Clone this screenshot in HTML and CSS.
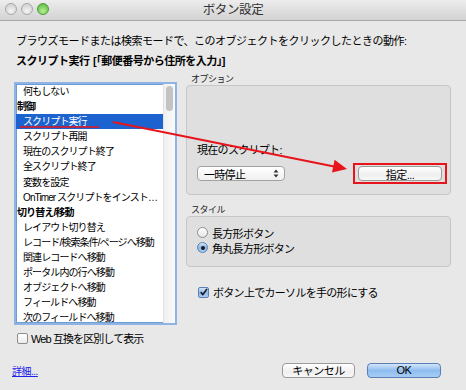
FILE: index.html
```html
<!DOCTYPE html>
<html lang="ja">
<head>
    <meta charset="UTF-8">
    <meta name="viewport" content="width=device-width, initial-scale=1.0">
    <title>ボタン設定</title>
    <link rel="stylesheet" href="styles.css">
</head>
<body>
    <div class="window">
        <div class="titlebar">
            <div class="lights">
                <span class="light"></span>
                <span class="light"></span>
                <span class="light green"></span>
            </div>
            <div class="title">ボタン設定</div>
        </div>

        <div class="content">
            <p class="prompt">ブラウズモードまたは検索モードで、このオブジェクトをクリックしたときの動作:</p>
            <p class="action">スクリプト実行 [「郵便番号から住所を入力」]</p>

            <div class="main">
                <div class="left">
                    <div class="list">
                        <ul class="items">
                            <li class="item">何もしない</li>
                            <li class="group">制御</li>
                            <li class="item selected">スクリプト実行</li>
                            <li class="item">スクリプト再開</li>
                            <li class="item">現在のスクリプト終了</li>
                            <li class="item">全スクリプト終了</li>
                            <li class="item">変数を設定</li>
                            <li class="item">OnTimer スクリプトをインスト…</li>
                            <li class="group">切り替え/移動</li>
                            <li class="item">レイアウト切り替え</li>
                            <li class="item">レコード/検索条件/ページへ移動</li>
                            <li class="item">関連レコードへ移動</li>
                            <li class="item">ポータル内の行へ移動</li>
                            <li class="item">オブジェクトへ移動</li>
                            <li class="item">フィールドへ移動</li>
                            <li class="item">次のフィールドへ移動</li>
                        </ul>
                        <div class="scrollbar"><div class="thumb"></div></div>
                    </div>
                    <div class="check web">
                        <span class="box"></span>
                        <span>Web 互換を区別して表示</span>
                    </div>
                </div>

                <div class="right">
                    <div class="group-label">オプション</div>
                    <div class="panel options">
                        <div class="field-label">現在のスクリプト:</div>
                        <div class="options-row">
                            <div class="popup">
                                <span>一時停止</span>
                                <svg class="stepper" width="6" height="9" viewBox="0 0 6 9">
                                    <path d="M0.5 3.5 L3 0.5 L5.5 3.5 Z M0.5 5.5 L3 8.5 L5.5 5.5 Z" fill="#333"/>
                                </svg>
                            </div>
                            <div class="highlight">
                                <div class="button specify">指定...</div>
                            </div>
                        </div>
                    </div>

                    <div class="group-label">スタイル</div>
                    <div class="panel style">
                        <div class="radio"><span class="dot"></span>長方形ボタン</div>
                        <div class="radio"><span class="dot on"></span>角丸長方形ボタン</div>
                    </div>

                    <div class="check cursor">
                        <span class="box on">
                            <svg width="11" height="11" viewBox="0 0 11 11">
                                <path d="M2.5 5.5 L4.6 8.2 L9.5 1.5" fill="none" stroke="#1b1b1b" stroke-width="1.8" stroke-linecap="round" stroke-linejoin="round"/>
                            </svg>
                        </span>
                        <span>ボタン上でカーソルを手の形にする</span>
                    </div>
                </div>
            </div>

            <div class="footer">
                <a class="details" href="#">詳細...</a>
                <div class="buttons">
                    <div class="button cancel">キャンセル</div>
                    <div class="button default">OK</div>
                </div>
            </div>
        </div>

        <!-- red annotation: underline + arrow pointing to the button -->
        <svg class="annotation" width="466" height="390" viewBox="0 0 466 390">
            <line x1="20" y1="127" x2="99" y2="127" stroke="#e8141b" stroke-width="1.5"/>
            <line x1="113" y1="122" x2="334" y2="166.4" stroke="#e8141b" stroke-width="2"/>
            <polygon points="347,169 332,172.5 334.6,159.8" fill="#e8141b"/>
        </svg>
    </div>
</body>
</html>
```

FILE: styles.css
```css
* {
    box-sizing: border-box;
}
body {
    margin: 0;
    font-family: "Liberation Sans", "Noto Sans CJK JP", sans-serif;
    font-size: 11px;
    color: #000;
}
.window {
    position: relative;
    width: 466px;
    height: 390px;
    background-color: #e8e8e8;
    overflow: hidden;
}
.titlebar {
    position: relative;
    height: 21px;
    background: linear-gradient(#ededed, #d2d2d2);
    border-bottom: 1px solid #a8a8a8;
}
.lights {
    display: flex;
    gap: 4px;
    padding: 3px 0 0 5px;
}
.light {
    width: 12px;
    height: 12px;
    border-radius: 50%;
    border: 1px solid #a9a9a9;
    background: radial-gradient(circle at 50% 70%, #f4f4f4, #c9c9c9);
}
.light.green {
    border-color: #4c9a3a;
    background: radial-gradient(circle at 50% 70%, #b8f08f, #4fb33a);
}
.title {
    position: absolute;
    top: 0;
    left: 0;
    right: 0;
    text-align: center;
    line-height: 20px;
    font-size: 12.5px;
    letter-spacing: -0.4px;
    color: #333;
}
.content {
    padding: 10px 15px 0 14px;
}
.prompt,
.action {
    margin: 0;
    padding-left: 2px;
    line-height: 20px;
    letter-spacing: -0.5px;
}
.action {
    font-weight: bold;
    word-spacing: 1px;
}
.main {
    display: flex;
    gap: 9px;
    margin-top: 2px;
}
.left {
    width: 163px;
    padding-top: 9px;
}
.list {
    display: flex;
    height: 243px;
    background-color: #fff;
    border: 2px solid #8fb4e4;
    box-shadow: inset 0 0 0 1px #6e9cd8;
    overflow: hidden;
}
.items {
    flex: 1;
    margin: 0;
    padding: 0;
    list-style: none;
    font-size: 10px;
    letter-spacing: -0.9px;
}
.items li {
    height: 15.1px;
    line-height: 15.1px;
    white-space: nowrap;
    overflow: hidden;
}
.group {
    padding-left: 1px;
    font-weight: bold;
}
.item {
    padding-left: 7px;
}
.item.selected {
    background-color: #1d63cf;
    color: #fff;
}
.scrollbar {
    width: 12px;
    background: linear-gradient(90deg, #f0f0f0, #fafafa);
    border-left: 1px solid #e2e2e2;
    padding: 2px 0 0 2px;
}
.thumb {
    width: 7px;
    height: 25px;
    border-radius: 4px;
    background-color: #c3c3c3;
}
.check {
    display: flex;
    align-items: center;
    height: 16px;
    letter-spacing: -0.7px;
}
.box {
    display: flex;
    align-items: center;
    justify-content: center;
    width: 11px;
    height: 11px;
    border: 1px solid #8c8c8c;
    border-radius: 2px;
    background: linear-gradient(#fff, #ececec);
}
.box.on {
    border-color: #5a80b6;
    background: linear-gradient(#d6e6f8, #8ab6ea 50%, #a9cdf3);
}
.web {
    margin-top: 5px;
    padding-left: 3px;
    gap: 3px;
    letter-spacing: -0.9px;
}
.right {
    flex: 1;
}
.group-label {
    height: 12px;
    line-height: 12px;
    padding-left: 5px;
    font-size: 9px;
    letter-spacing: -0.5px;
    color: #222;
}
.panel {
    background-color: #dfdfdf;
    border: 1px solid #c6c6c6;
    border-radius: 4px;
}
.panel + .group-label {
    margin-top: 9px;
}
.options {
    display: flex;
    flex-direction: column;
    justify-content: flex-end;
    height: 110px;
    padding: 0 3px 10px 10px;
}
.field-label {
    line-height: 14px;
    margin-bottom: 6px;
    letter-spacing: -0.7px;
}
.options-row {
    display: flex;
    align-items: center;
    justify-content: space-between;
}
.popup {
    display: flex;
    align-items: center;
    justify-content: space-between;
    width: 88px;
    height: 15px;
    padding: 0 5px 0 6px;
    border: 1px solid #a2a2a2;
    border-radius: 4px;
    background: linear-gradient(#fff, #f0f0f0);
    letter-spacing: -0.7px;
}
.highlight {
    padding: 1px 3px;
    border: 2px solid #e8141b;
}
.button {
    display: flex;
    align-items: center;
    justify-content: center;
    height: 15px;
    border: 1px solid #9b9b9b;
    border-radius: 4px;
    background: linear-gradient(#ffffff, #efefef 60%, #f7f7f7);
    letter-spacing: -0.5px;
}
.specify {
    width: 84px;
}
.style {
    height: 51px;
    padding: 8px 0 0 10px;
}
.radio {
    display: flex;
    align-items: center;
    gap: 4px;
    height: 15px;
    letter-spacing: -0.7px;
}
.dot {
    display: flex;
    align-items: center;
    justify-content: center;
    width: 11px;
    height: 11px;
    border: 1px solid #8e8e8e;
    border-radius: 50%;
    background: linear-gradient(#fff, #e6e6e6);
}
.dot.on {
    border-color: #5a80b6;
    background: linear-gradient(#d6e6f8, #8ab6ea 50%, #a9cdf3);
}
.dot.on::after {
    content: "";
    width: 4px;
    height: 4px;
    border-radius: 50%;
    background-color: #1b1b1b;
}
.cursor {
    margin-top: 17px;
    padding-left: 12px;
    gap: 4px;
}
.footer {
    display: flex;
    align-items: center;
    justify-content: space-between;
    height: 16px;
    margin-top: 16px;
    padding-right: 10px;
}
.details {
    margin-left: -2px;
    font-size: 10px;
    letter-spacing: -0.5px;
    color: #2020e8;
}
.buttons {
    display: flex;
    gap: 12px;
}
.cancel {
    width: 73px;
}
.default {
    width: 74px;
    border-color: #5b7fb4;
    background: linear-gradient(#d4e6fa, #8fbcf0 50%, #a6cdf5);
}
.annotation {
    position: absolute;
    top: 0;
    left: 0;
    pointer-events: none;
}
```
